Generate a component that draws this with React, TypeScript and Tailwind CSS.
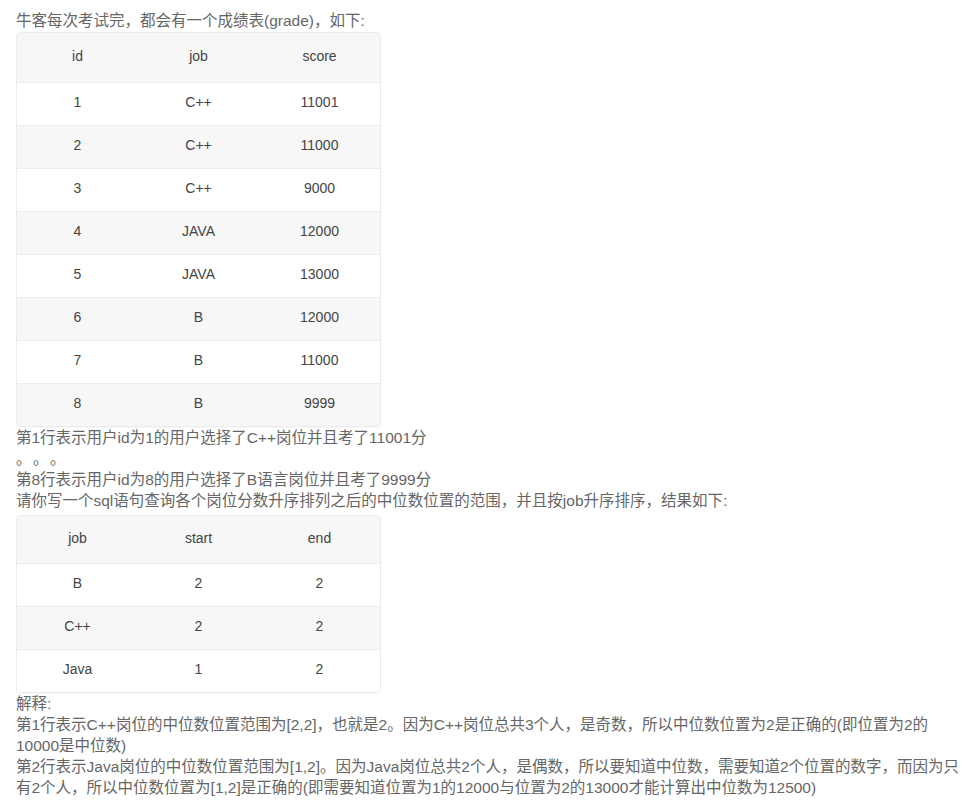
const grade = [
  ['1', 'C++', '11001'],
  ['2', 'C++', '11000'],
  ['3', 'C++', '9000'],
  ['4', 'JAVA', '12000'],
  ['5', 'JAVA', '13000'],
  ['6', 'B', '12000'],
  ['7', 'B', '11000'],
  ['8', 'B', '9999'],
];

const result = [
  ['B', '2', '2'],
  ['C++', '2', '2'],
  ['Java', '1', '2'],
];

function Table({ head, rows, headH }: { head: string[]; rows: string[][]; headH: string }) {
  return (
    <div className="w-[365px] border border-[#ececec] rounded-[4px] overflow-hidden shadow-[0_1px_2px_rgba(0,0,0,0.04)] text-[14px] text-[#444]">
      <div className={`grid grid-cols-3 bg-[#f7f7f7] items-center pb-[3px] ${headH}`}>
        {head.map((h) => (
          <div key={h} className="text-center">{h}</div>
        ))}
      </div>
      {rows.map((r, i) => (
        <div
          key={i}
          className={`grid grid-cols-3 items-center h-[43px] pb-[3px] border-t border-[#ececec] ${i % 2 === 1 ? 'bg-[#f7f7f7]' : 'bg-white'}`}
        >
          {r.map((c, j) => (
            <div key={j} className="text-center">{c}</div>
          ))}
        </div>
      ))}
    </div>
  );
}

export default function App() {
  return (
    <div className="min-h-[800px] bg-white pl-[16px] pt-[10px] text-[15.5px] leading-[21px] text-[#666] font-['Liberation_Sans','Noto_Sans_CJK_SC',sans-serif]">
      <p>牛客每次考试完，都会有一个成绩表(grade)，如下:</p>
      <div className="mt-[1px]">
        <Table head={['id', 'job', 'score']} rows={grade} headH="h-[49px]" />
      </div>
      <p>第1行表示用户id为1的用户选择了C++岗位并且考了11001分</p>
      <p className="[text-spacing-trim:space-all] tracking-[1.5px]">。。。</p>
      <p>第8行表示用户id为8的用户选择了B语言岗位并且考了9999分</p>
      <p>请你写一个sql语句查询各个岗位分数升序排列之后的中位数位置的范围，并且按job升序排序，结果如下:</p>
      <div className="mt-[4px]">
        <Table head={['job', 'start', 'end']} rows={result} headH="h-[47px]" />
      </div>
      <p>解释:</p>
      <p>第1行表示C++岗位的中位数位置范围为[2,2]，也就是2。因为C++岗位总共3个人，是奇数，所以中位数位置为2是正确的(即位置为2的10000是中位数)</p>
      <p>第2行表示Java岗位的中位数位置范围为[1,2]。因为Java岗位总共2个人，是偶数，所以要知道中位数，需要知道2个位置的数字，而因为只有2个人，所以中位数位置为[1,2]是正确的(即需要知道位置为1的12000与位置为2的13000才能计算出中位数为12500)</p>
    </div>
  );
}
